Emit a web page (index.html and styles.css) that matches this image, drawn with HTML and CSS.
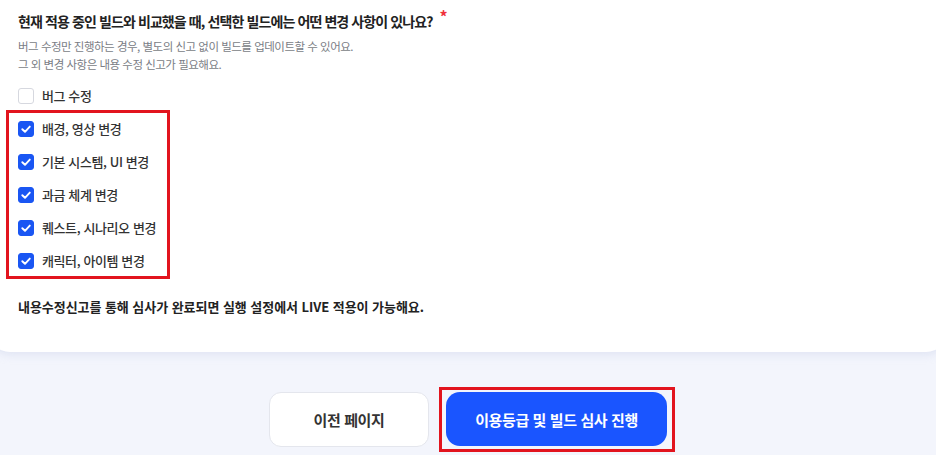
FILE: index.html
```html
<!DOCTYPE html>
<html lang="ko">
<head>
<meta charset="utf-8">
<link rel="stylesheet" href="styles.css">
</head>
<body>
<div class="card">
  <h2 class="title">현재 적용 중인 빌드와 비교했을 때, 선택한 빌드에는 어떤 변경 사항이 있나요?<span class="req">*</span></h2>
  <p class="desc">버그 수정만 진행하는 경우, 별도의 신고 없이 빌드를 업데이트할 수 있어요.<br>그 외 변경 사항은 내용 수정 신고가 필요해요.</p>
  <div class="options">
    <label class="opt"><span class="box"></span><span class="lbl">버그 수정</span></label>
    <div class="marked">
      <label class="opt"><span class="box on"><svg viewBox="0 0 16 16" width="16" height="16"><polyline points="4.3,8.2 7,10.8 11.8,5.6" fill="none" stroke="#fff" stroke-width="1.9" stroke-linecap="round" stroke-linejoin="round"/></svg></span><span class="lbl">배경, 영상 변경</span></label>
      <label class="opt"><span class="box on"><svg viewBox="0 0 16 16" width="16" height="16"><polyline points="4.3,8.2 7,10.8 11.8,5.6" fill="none" stroke="#fff" stroke-width="1.9" stroke-linecap="round" stroke-linejoin="round"/></svg></span><span class="lbl">기본 시스템, UI 변경</span></label>
      <label class="opt"><span class="box on"><svg viewBox="0 0 16 16" width="16" height="16"><polyline points="4.3,8.2 7,10.8 11.8,5.6" fill="none" stroke="#fff" stroke-width="1.9" stroke-linecap="round" stroke-linejoin="round"/></svg></span><span class="lbl">과금 체계 변경</span></label>
      <label class="opt"><span class="box on"><svg viewBox="0 0 16 16" width="16" height="16"><polyline points="4.3,8.2 7,10.8 11.8,5.6" fill="none" stroke="#fff" stroke-width="1.9" stroke-linecap="round" stroke-linejoin="round"/></svg></span><span class="lbl">퀘스트, 시나리오 변경</span></label>
      <label class="opt"><span class="box on"><svg viewBox="0 0 16 16" width="16" height="16"><polyline points="4.3,8.2 7,10.8 11.8,5.6" fill="none" stroke="#fff" stroke-width="1.9" stroke-linecap="round" stroke-linejoin="round"/></svg></span><span class="lbl">캐릭터, 아이템 변경</span></label>
    </div>
  </div>
  <p class="note">내용수정신고를 통해 심사가 완료되면 실행 설정에서 LIVE 적용이 가능해요.</p>
</div>
<div class="actions">
  <button class="btn prev">이전 페이지</button>
  <div class="hl"><button class="btn primary">이용등급 및 빌드 심사 진행</button></div>
</div>
</body>
</html>
```
FILE: styles.css
```css
html, body {
  margin: 0;
  padding: 0;
}
body {
  background: #f3f5fc;
  font-family: "Noto Sans CJK KR", "Noto Sans", sans-serif;
  color: #222;
  overflow: hidden;
  width: 936px;
  height: 455px;
}
.card {
  background: #fff;
  margin: 0 -12px;
  padding: 4px 30px 0;
  height: 348px;
  border-radius: 0 0 22px 22px;
  box-shadow: 0 3px 8px rgba(190, 198, 228, 0.35);
  position: relative;
}
.title {
  margin: 0;
  font-size: 14px;
  line-height: 24px;
  font-weight: 700;
  color: #222;
  letter-spacing: -0.9px;
}
.req {
  color: #f0323c;
  font-size: 16px;
  margin-left: 7px;
  vertical-align: 4px;
}
.desc {
  margin: 4px 0 0;
  font-size: 11.5px;
  line-height: 18px;
  color: #7a7d85;
  letter-spacing: -0.5px;
}
.options {
  margin-top: 6px;
  display: flex;
  flex-direction: column;
}
.marked {
  display: flex;
  flex-direction: column;
  position: relative;
  width: 142px;
}
.marked::after {
  content: "";
  position: absolute;
  left: -12px;
  right: -10px;
  top: -2px;
  bottom: -2px;
  border: 3px solid #e2141e;
  pointer-events: none;
}
.opt {
  display: flex;
  align-items: center;
  gap: 8px;
  height: 33px;
}
.box {
  width: 16px;
  height: 16px;
  box-sizing: border-box;
  border: 1px solid #d6d8df;
  border-radius: 3px;
  background: #fff;
  display: flex;
  flex: none;
}
.box.on {
  background: #1a56f3;
  border-color: #1a56f3;
}
.box svg {
  margin: -1px;
}
.lbl {
  font-size: 13px;
  font-weight: 500;
  color: #333;
  letter-spacing: -0.4px;
  white-space: nowrap;
}
.note {
  margin: 20px 0 0;
  font-size: 13px;
  font-weight: 700;
  line-height: 20px;
  color: #222;
  letter-spacing: -0.05px;
}
.actions {
  display: flex;
  justify-content: center;
  align-items: flex-start;
  gap: 17px;
  margin-top: 40px;
}
.btn {
  height: 55px;
  border-radius: 12px;
  font-family: "Noto Sans CJK KR", "Noto Sans", sans-serif;
  font-size: 15px;
  font-weight: 700;
  letter-spacing: -0.4px;
  cursor: pointer;
}
.prev {
  width: 160px;
  background: #fff;
  border: 1px solid #e4e6ed;
  color: #333;
}
.hl {
  position: relative;
  display: flex;
}
.hl::after {
  content: "";
  position: absolute;
  left: -7px;
  right: -8px;
  top: -5px;
  bottom: -6px;
  border: 3px solid #e2141e;
  pointer-events: none;
}
.primary {
  width: 221px;
  height: 54px;
  background: #1a55ff;
  border: none;
  color: #fff;
  border-radius: 14px;
}
```
